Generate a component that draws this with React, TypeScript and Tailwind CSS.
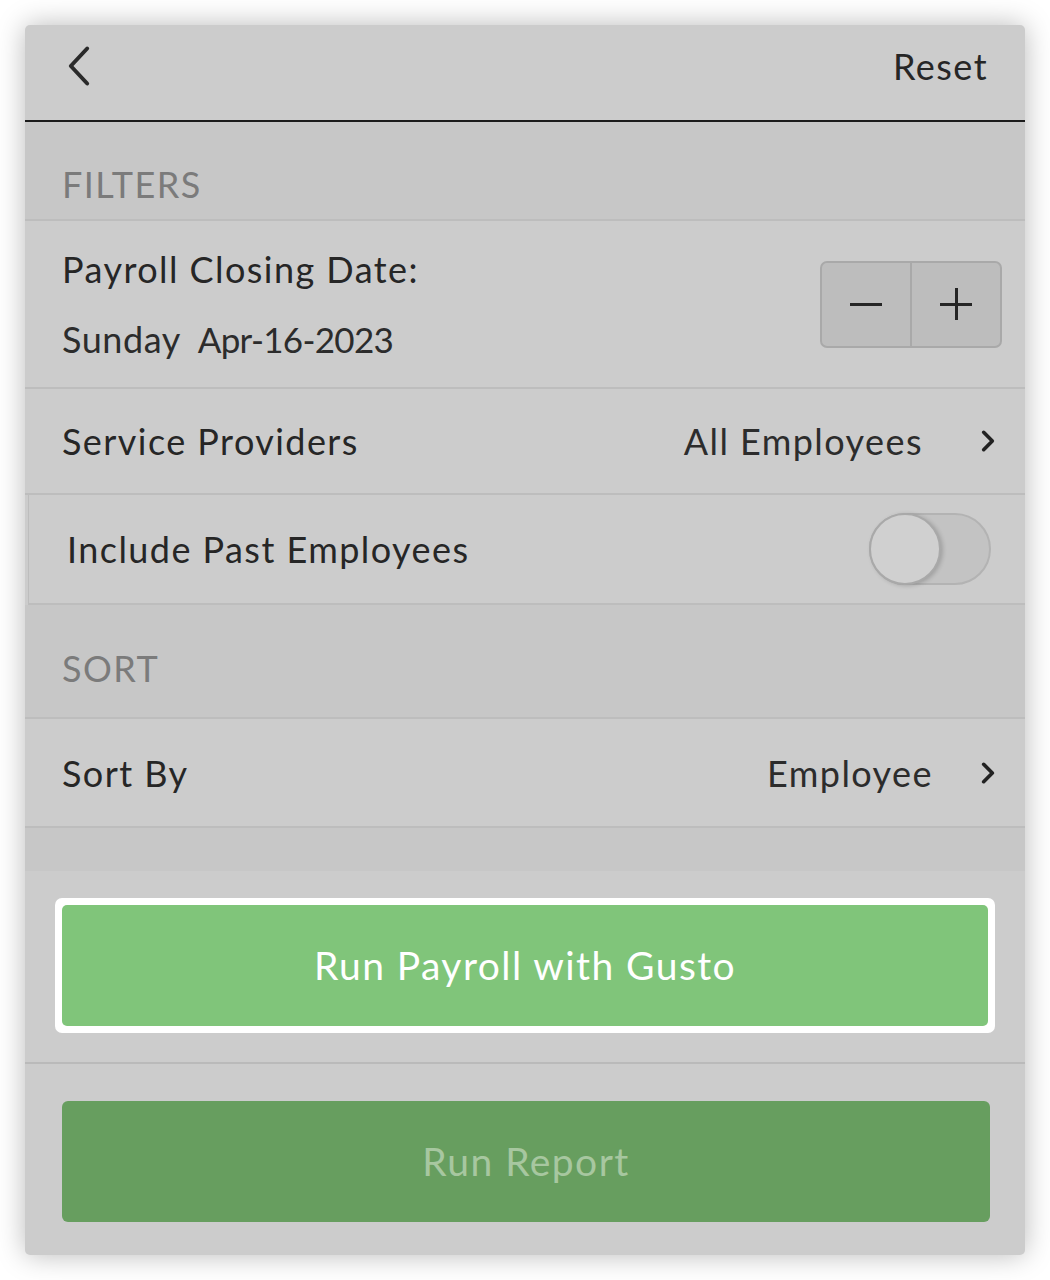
import React from "react";

function Chevron({ dir = "right", className = "" }: { dir?: "left" | "right"; className?: string }) {
  return (
    <svg viewBox="0 0 24 36" fill="none" aria-hidden="true" className={className}>
      {dir === "left" ? (
        <path d="M19 3 5 18l14 15" stroke="currentColor" strokeWidth="3.4" strokeLinecap="round" strokeLinejoin="round" />
      ) : (
        <path d="M6 6l12 12-12 12" stroke="currentColor" strokeWidth="5" strokeLinecap="round" strokeLinejoin="round" />
      )}
    </svg>
  );
}

function SectionLabel({ label, className = "" }: { label: string; className?: string }) {
  return (
    <div className={`flex items-end border-b-2 border-[#bdbdbd] bg-[#c7c7c7] pl-[37px] text-[#7b7b7b] ${className}`}>
      {label}
    </div>
  );
}

function LinkRow({ label, value, h, gap }: { label: string; value: string; h: string; gap: string }) {
  return (
    <div className={`flex items-center border-b-2 border-[#bdbdbd] pl-[37px] pr-[28px] ${h}`}>
      <span className="flex-1">{label}</span>
      <span className="text-[#2c2c2c]">{value}</span>
      <Chevron className={`h-[26px] w-[18px] text-[#222] ${gap}`} />
    </div>
  );
}

export default function App() {
  return (
    <div className="min-h-screen bg-white p-[25px] font-['Lato','Noto_Sans',sans-serif] text-[36px] tracking-[0.04em] text-[#262626]">
      <div className="flex h-[1230px] w-[1000px] flex-col overflow-hidden rounded-[5px] bg-[#cccccc] shadow-[0_0_28px_rgba(0,0,0,0.28)]">
        <header className="flex h-[97px] shrink-0 items-center justify-between border-b-2 border-[#1c1c1c] pl-[40px] pr-[37px]">
          <Chevron dir="left" className="mt-[-14px] h-[44px] w-[28px] text-[#2a2a2a]" />
          <span className="mt-[-14px] text-[#262626]">Reset</span>
        </header>

        <SectionLabel label="FILTERS" className="h-[99px] pb-[8px]" />

        <div className="flex h-[168px] items-center border-b-2 border-[#bdbdbd] pl-[37px] pr-[23px]">
          <div className="flex-1">
            <div className="leading-[40px]">Payroll Closing Date:</div>
            <div className="mt-[30px] flex items-baseline leading-[40px] tracking-[0.015em] text-[#2c2c2c]">
              <span>Sunday</span>
              <span className="ml-[17px] text-[35px] tracking-[-0.02em]">Apr-16-2023</span>
            </div>
          </div>
          <div className="flex h-[87px] w-[182px] overflow-hidden rounded-[7px] border-2 border-[#a9a9a9] bg-[#bdbdbd]">
            <div className="flex flex-1 items-center justify-center border-r-2 border-[#a9a9a9]">
              <span className="block h-[3px] w-[32px] bg-[#262626]" />
            </div>
            <div className="relative flex flex-1 items-center justify-center">
              <span className="block h-[3px] w-[32px] bg-[#262626]" />
              <span className="absolute h-[32px] w-[3px] bg-[#262626]" />
            </div>
          </div>
        </div>

        <LinkRow label="Service Providers" value="All Employees" h="h-[106px]" gap="ml-[56px]" />

        <div className="ml-[3px] flex h-[110px] items-center border-b-2 border-l border-[#bdbdbd] pl-[38px] pr-[34px]">
          <span className="flex-1">Include Past Employees</span>
          <div className="relative h-[72px] w-[122px] rounded-full border-2 border-[#b3b3b3] bg-[#c3c3c3]">
            <div className="absolute left-[-2px] top-[-2px] h-[72px] w-[72px] rounded-full border-2 border-[#a9a9a9] bg-[#d0d0d0] shadow-[2px_1px_4px_rgba(0,0,0,0.18)]" />
          </div>
        </div>

        <SectionLabel label="SORT" className="h-[114px] pb-[22px]" />

        <LinkRow label="Sort By" value="Employee" h="h-[109px]" gap="ml-[46px]" />

        <div className="h-[43px] bg-[#c7c7c7]" />

        <div className="flex flex-1 flex-col">
          <div className="border-b-2 border-[#bababa] px-[30px] pb-[29px] pt-[27px]">
            <div className="rounded-[7px] bg-white p-[7px]">
              <div className="flex h-[121px] items-center justify-center rounded-[5px] bg-[#80c57a] text-[39px] text-white">
                Run Payroll with Gusto
              </div>
            </div>
          </div>
          <div className="pl-[37px] pr-[35px] pt-[37px]">
            <div className="flex h-[121px] items-center justify-center rounded-[6px] bg-[#679e5f] text-[39px] text-[#a7c7a0]">
              Run Report
            </div>
          </div>
        </div>
      </div>
    </div>
  );
}
